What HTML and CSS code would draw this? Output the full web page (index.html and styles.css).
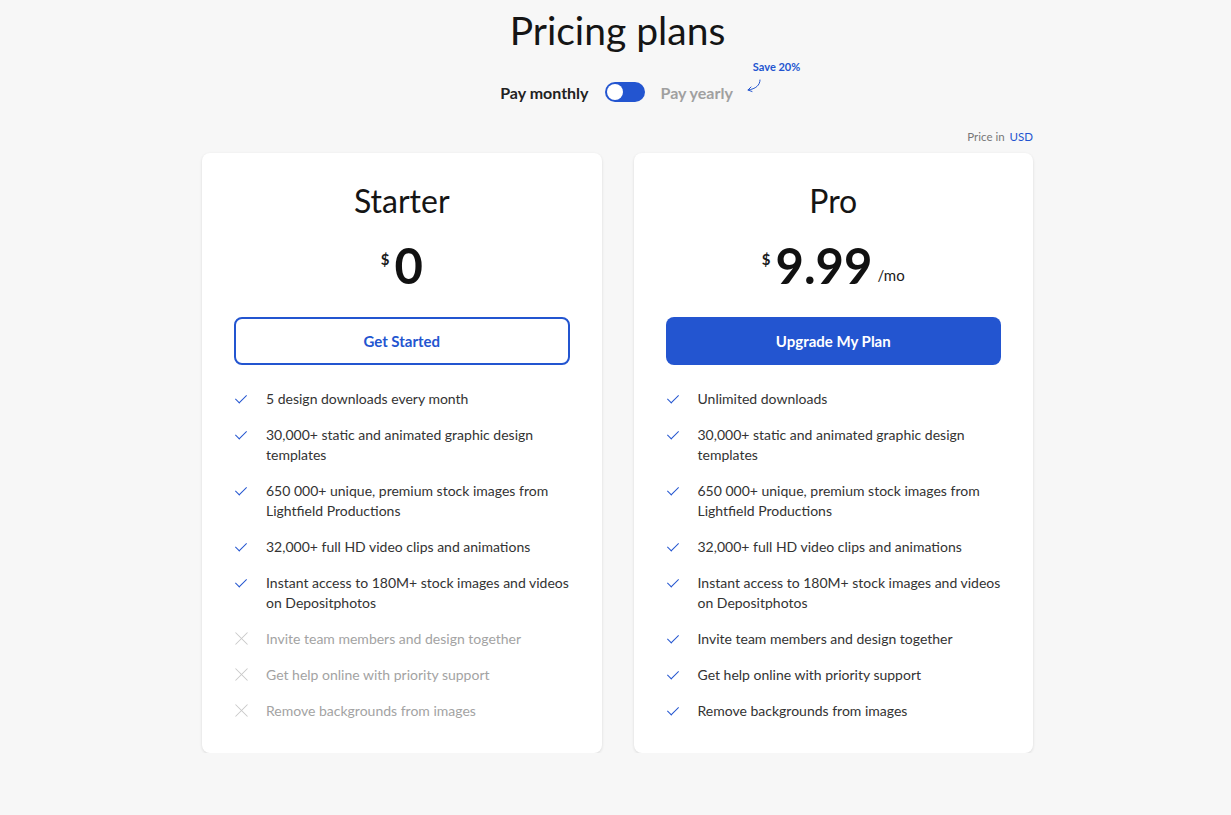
FILE: index.html
```html
<!DOCTYPE html>
<html lang="en">

<head>
    <meta charset="UTF-8">
    <meta name="viewport" content="width=device-width, initial-scale=1.0">
    <title>Pricing plans</title>
    <link rel="stylesheet" href="styles.css">
</head>

<body>
    <div class="page">
        <h1 class="title">Pricing plans</h1>

        <div class="billing">
            <span class="billing-label active">Pay monthly</span>
            <span class="switch"><span class="knob"></span></span>
            <span class="billing-label">Pay yearly</span>
            <span class="save">
                <span class="save-text">Save 20%</span>
                <svg class="save-arrow" width="18" height="16" viewBox="0 0 18 16" fill="none" stroke="#2355d0" stroke-width="1" stroke-linecap="round">
                    <path d="M15 1 C15 6 11 10 3 11" />
                    <path d="M6 8 L3 11 L7 12.5" />
                </svg>
            </span>
        </div>

        <div class="currency">Price in <span class="currency-code">USD</span></div>

        <div class="plans">
            <div class="card">
                <h2 class="plan-name">Starter</h2>
                <div class="price">
                    <span class="price-sign">$</span><span class="price-value">0</span>
                </div>
                <button class="btn btn-outline">Get Started</button>
                <ul class="features">
                    <li class="feature"><span class="ico ico-check"></span>5 design downloads every month</li>
                    <li class="feature"><span class="ico ico-check"></span>30,000+ static and animated graphic design templates</li>
                    <li class="feature"><span class="ico ico-check"></span>650 000+ unique, premium stock images from Lightfield Productions</li>
                    <li class="feature"><span class="ico ico-check"></span>32,000+ full HD video clips and animations</li>
                    <li class="feature"><span class="ico ico-check"></span>Instant access to 180M+ stock images and videos on Depositphotos</li>
                    <li class="feature off"><span class="ico ico-cross"></span>Invite team members and design together</li>
                    <li class="feature off"><span class="ico ico-cross"></span>Get help online with priority support</li>
                    <li class="feature off"><span class="ico ico-cross"></span>Remove backgrounds from images</li>
                </ul>
            </div>

            <div class="card">
                <h2 class="plan-name">Pro</h2>
                <div class="price">
                    <span class="price-sign">$</span><span class="price-value">9.99</span><span class="price-period">/mo</span>
                </div>
                <button class="btn btn-solid">Upgrade My Plan</button>
                <ul class="features">
                    <li class="feature"><span class="ico ico-check"></span>Unlimited downloads</li>
                    <li class="feature"><span class="ico ico-check"></span>30,000+ static and animated graphic design templates</li>
                    <li class="feature"><span class="ico ico-check"></span>650 000+ unique, premium stock images from Lightfield Productions</li>
                    <li class="feature"><span class="ico ico-check"></span>32,000+ full HD video clips and animations</li>
                    <li class="feature"><span class="ico ico-check"></span>Instant access to 180M+ stock images and videos on Depositphotos</li>
                    <li class="feature"><span class="ico ico-check"></span>Invite team members and design together</li>
                    <li class="feature"><span class="ico ico-check"></span>Get help online with priority support</li>
                    <li class="feature"><span class="ico ico-check"></span>Remove backgrounds from images</li>
                </ul>
            </div>
        </div>
    </div>
</body>

</html>
```

FILE: styles.css
```css
* {
    padding: 0;
    margin: 0;
    box-sizing: border-box;
}

body {
    background-color: #f7f7f7;
    color: #1b1b1b;
    font-family: Lato, "Open Sans", sans-serif;
    padding-left: 4px;
}

.page {
    width: 831px;
    margin: 0 auto;
    padding-top: 6px;
}

.title {
    text-align: center;
    font-size: 39px;
    font-weight: 400;
    line-height: 48px;
    color: #151515;
}

.billing {
    display: flex;
    justify-content: center;
    align-items: center;
    gap: 16px;
    margin-top: 28px;
    margin-left: 30px;
}

.billing-label {
    font-size: 16px;
    font-weight: 700;
    color: #a0a0a0;
}

.billing-label.active {
    color: #222;
}

.switch {
    display: flex;
    align-items: center;
    width: 40px;
    height: 20px;
    padding: 2px;
    border-radius: 10px;
    background-color: #2355d0;
}

.knob {
    width: 16px;
    height: 16px;
    border-radius: 50%;
    background-color: white;
}

.save {
    position: relative;
    width: 20px;
    height: 16px;
    margin-left: -4px;
}

.save-arrow {
    position: absolute;
    left: 0;
    top: -5px;
}

.save-text {
    position: absolute;
    left: 8px;
    top: -24px;
    font-size: 11px;
    font-weight: 700;
    color: #2355d0;
    white-space: nowrap;
}

.currency {
    text-align: right;
    font-size: 11.5px;
    color: #777;
    margin-top: 28px;
}

.currency-code {
    color: #2355d0;
    margin-left: 2px;
}

.plans {
    display: grid;
    grid-template-columns: 1fr 1fr;
    gap: 32px;
    margin-top: 10px;
}

.card {
    background-color: white;
    border-radius: 8px;
    box-shadow: 0 1px 3px rgba(0, 0, 0, 0.12);
    padding: 30px 32px 32px;
}

.plan-name {
    text-align: center;
    font-size: 32px;
    font-weight: 400;
    line-height: 36px;
    color: #151515;
}

.price {
    display: flex;
    justify-content: center;
    align-items: flex-start;
    margin-top: 21px;
    height: 50px;
}

.price-sign {
    font-size: 15px;
    font-weight: 700;
    margin-top: 10px;
    margin-right: 5px;
}

.price-value {
    font-size: 49px;
    font-weight: 700;
    line-height: 50px;
    color: #111;
}

.price-period {
    align-self: flex-end;
    font-size: 15px;
    margin-left: 5px;
    margin-bottom: 6px;
}

.btn {
    display: block;
    width: 100%;
    height: 48px;
    margin-top: 27px;
    border-radius: 8px;
    font-family: inherit;
    font-size: 15px;
    font-weight: 700;
    cursor: pointer;
}

.btn-outline {
    background-color: white;
    color: #2355d0;
    border: 2px solid #2355d0;
}

.btn-solid {
    background-color: #2355d0;
    color: white;
    border: none;
}

.features {
    list-style: none;
    margin-top: 24px;
    margin-right: -12px;
    display: flex;
    flex-direction: column;
    gap: 16px;
}

.feature {
    display: flex;
    font-size: 14px;
    line-height: 20px;
    color: #333;
}

.feature.off {
    color: #a3a3a3;
}

.ico {
    flex: none;
    position: relative;
    width: 14px;
    height: 20px;
    margin-right: 18px;
}

/* tick: rotated L-shape */
.ico-check::after {
    content: "";
    position: absolute;
    left: 4px;
    top: 3px;
    width: 5px;
    height: 10px;
    border-right: 1.6px solid #2355d0;
    border-bottom: 1.6px solid #2355d0;
    transform: rotate(45deg);
}

/* cross: two thin bars */
.ico-cross::before,
.ico-cross::after {
    content: "";
    position: absolute;
    left: -1px;
    top: 9px;
    width: 17px;
    height: 1px;
    background-color: #c8c8c8;
    transform: rotate(45deg);
}

.ico-cross::after {
    transform: rotate(-45deg);
}
```
